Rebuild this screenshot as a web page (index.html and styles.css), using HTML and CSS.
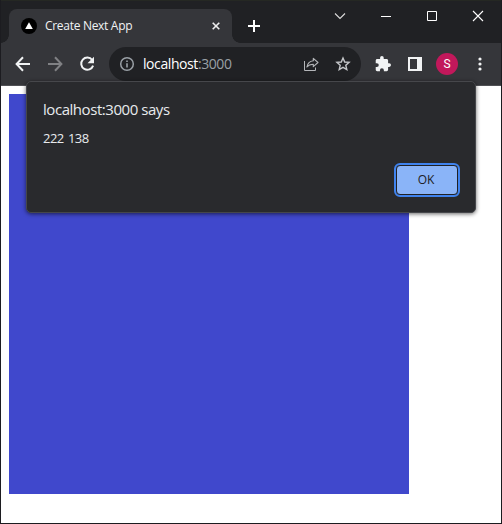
FILE: index.html
```html
<!DOCTYPE html>
<html lang="en">
<head>
<meta charset="utf-8">
<title>Create Next App</title>
<link rel="stylesheet" href="styles.css">
</head>
<body>
<div class="window">
  <header class="tabstrip">
    <div class="tab">
      <svg class="favicon" width="16" height="16" viewBox="0 0 16 16"><circle cx="8" cy="8" r="8" fill="#000"/><path d="M8 4.2 11.8 11H4.2z" fill="#fff"/></svg>
      <span class="tab-title">Create Next App</span>
      <svg class="tab-close" width="8" height="8" viewBox="0 0 8 8"><path d="M.7.7l6.6 6.6M7.3.7.7 7.3" stroke="#eee" stroke-width="1.6"/></svg>
    </div>
    <svg class="new-tab" width="12" height="12" viewBox="0 0 12 12"><path d="M6 0v12M0 6h12" stroke="#fff" stroke-width="2"/></svg>
    <div class="controls">
      <svg width="46" height="30" viewBox="0 0 46 30"><path d="M18 11.5l5 5 5-5" fill="none" stroke="#ddd" stroke-width="1.1"/></svg>
      <svg width="46" height="30" viewBox="0 0 46 30"><path d="M18 14.5h10" stroke="#fff"/></svg>
      <svg width="46" height="30" viewBox="0 0 46 30"><path d="M18.5 9.5h9v9h-9z" fill="none" stroke="#fff"/></svg>
      <svg width="46" height="30" viewBox="0 0 46 30"><path d="M18 9l10 10M28 9 18 19" stroke="#fff" stroke-width="1.1"/></svg>
    </div>
  </header>
  <nav class="toolbar">
    <svg class="nav" width="16" height="16" viewBox="0 0 16 16"><path d="M15 8H2M8 1.3 1.6 8 8 14.7" fill="none" stroke="#f1f3f4" stroke-width="2"/></svg>
    <svg class="nav" width="16" height="16" viewBox="0 0 16 16"><path d="M1 8h13M8 1.3 14.4 8 8 14.7" fill="none" stroke="#808184" stroke-width="2"/></svg>
    <svg class="nav" width="16" height="16" viewBox="0 0 16 16"><path d="M13.2 4A6.1 6.1 0 1 0 14.1 9.7" fill="none" stroke="#f1f3f4" stroke-width="2"/><path d="M15 .8v6.5H8.5z" fill="#f1f3f4"/></svg>
    <div class="omnibox">
      <svg class="info" width="16" height="16" viewBox="0 0 16 16"><circle cx="8" cy="8" r="6.3" fill="none" stroke="#9aa0a6" stroke-width="1.5"/><path d="M8 7.2v4.3M8 4.4V6" stroke="#9aa0a6" stroke-width="1.6"/></svg>
      <span class="url">localhost<span class="port">:3000</span></span>
      <svg class="share" width="16" height="16" viewBox="0 0 16 16"><path d="M1.5 5v9.5h11V11.5" fill="none" stroke="#b4b6b9"/><path d="M10.3 2.3v2.5C6.5 5.2 4.5 7.6 3.9 11 5.5 8.9 7.5 8.2 10.3 8.2v2.5L15 6.5z" fill="none" stroke="#b4b6b9" stroke-width="1.1" stroke-linejoin="round"/></svg>
      <svg class="star" width="16" height="16" viewBox="0 0 16 16"><path d="M8 2l1.7 4 4.4.4-3.3 2.9 1 4.3L8 11.3l-3.8 2.3 1-4.3L1.9 6.4l4.4-.4z" fill="none" stroke="#c4c6c9" stroke-width="1.4"/></svg>
    </div>
    <svg class="puzzle" width="16" height="16" viewBox="1 1 22 22"><path d="M20.5 11H19V7c0-1.100-.9-2-2-2h-4V3.5a2.5 2.5 0 0 0-5 0V5H4c-1.100 0-2 .9-2 2v3.8h1.5a2.7 2.7 0 0 1 0 5.4H2V20c0 1.100.9 2 2 2h3.8v-1.5a2.7 2.7 0 0 1 5.4 0V22H17c1.100 0 2-.9 2-2v-4h1.5a2.5 2.5 0 0 0 0-5z" fill="#f1f3f4"/></svg>
    <svg class="panel" width="14" height="14" viewBox="0 0 14 14"><path d="M0 0h14v14H0zM2 2v10h7V2z" fill="#f1f3f4" fill-rule="evenodd"/></svg>
    <span class="avatar">S</span>
    <svg class="menu" width="4" height="14" viewBox="0 0 4 14"><g fill="#f1f3f4"><circle cx="2" cy="2" r="1.6"/><circle cx="2" cy="7" r="1.6"/><circle cx="2" cy="12" r="1.6"/></g></svg>
  </nav>
  <main class="page"><div class="canvas"></div></main>
  <section class="dialog" role="dialog">
    <h1>localhost:3000 says</h1>
    <p>222 138</p>
    <button>OK</button>
  </section>
</div>
</body>
</html>
```
FILE: styles.css
```css
* { box-sizing: border-box; }
body { margin: 0; font-family: "Open Sans", "Noto Sans", sans-serif; overflow: hidden; }
svg { display: block; flex: none; }
.window { position: relative; width: 502px; height: 524px; border: 1px solid #1c1c20; border-top: 0; background: #fff; display: flex; flex-direction: column; }
.tabstrip { height: 43px; flex: none; background: #202124; border-top: 1px solid #252823; display: flex; align-items: flex-start; }
.tab { position: relative; width: 223px; height: 34px; margin: 8px 0 0 8px; padding: 0 12px; border-radius: 8px 8px 0 0; background: #35363a; display: flex; align-items: center; }
.tab::before, .tab::after { content: ""; position: absolute; bottom: 0; width: 8px; height: 8px; }
.tab::before { left: -8px; background: radial-gradient(circle at 0 0, #202124 7.5px, #35363a 8px); }
.tab::after { right: -8px; background: radial-gradient(circle at 100% 0, #202124 7.5px, #35363a 8px); }
.tab-title { margin-left: 8px; font-size: 12px; line-height: 16px; letter-spacing: -.3px; color: #f1f3f4; white-space: nowrap; flex: 1; }
.new-tab { margin: 19px 0 0 16px; }
.controls { display: flex; margin-left: auto; }
.toolbar { height: 43px; flex: none; background: #35363a; border-bottom: 1px solid #505155; display: flex; align-items: center; padding-left: 14px; }
.nav { margin-right: 16px; }
.omnibox { width: 252px; height: 34px; margin-left: -2px; border-radius: 17px; background: #202124; display: flex; align-items: center; padding: 0 10px; }
.url { margin-left: 8px; font-size: 14px; line-height: 20px; letter-spacing: -.42px; color: #fff; flex: 1; white-space: nowrap; }
.port { color: #9aa0a6; }
.share { margin-right: 16px; }
.puzzle { margin-left: 14px; }
.panel { margin-left: 17px; }
.avatar { width: 22px; height: 22px; margin-left: 14px; border-radius: 50%; background: #c2185b; color: #fff; font: 12px/22px Roboto, sans-serif; text-align: center; }
.menu { margin-left: 20px; }
.page { flex: 1; padding: 8px; background: #fff; }
.canvas { width: 400px; height: 400px; background: #4048cc; }
.dialog { position: absolute; left: 25px; top: 81px; width: 450px; height: 132px; padding: 15px 15px 15px 16px; border: 1px solid #46474b; border-radius: 5px; background: #292a2d; box-shadow: 0 1px 4px rgba(0,0,0,.6); color: #e8eaed; display: flex; flex-direction: column; }
h1 { margin: 0; font-size: 15px; line-height: 24px; font-weight: 400; letter-spacing: -.45px; }
p { margin: 7px 0 0; font-size: 13px; line-height: 20px; letter-spacing: -.5px; word-spacing: 1.2px; }
button { align-self: flex-end; width: 62px; height: 30px; margin: auto 2px 2px 0; border: 1px solid #202124; border-radius: 4px; outline: 2px solid #3f83ee; background: #8ab4f8; padding: 0 2px 2px 0; color: #202124; font: 12px "Open Sans", sans-serif; }
.controls { padding-top: .5px; }
```
